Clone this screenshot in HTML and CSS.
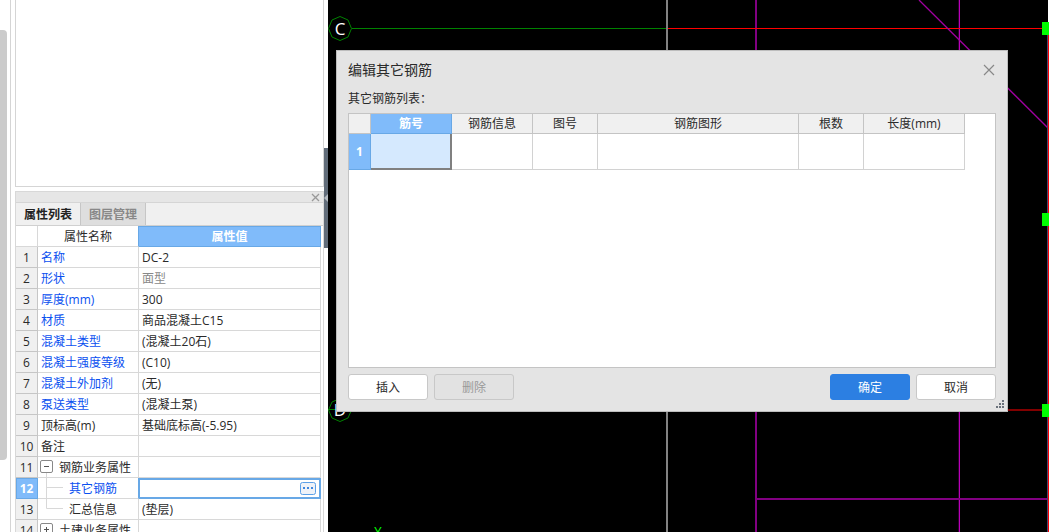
FILE: index.html
```
<!DOCTYPE html>
<html lang="zh-CN">
<head>
<meta charset="utf-8">
<title>属性列表</title>
<link rel="stylesheet" href="styles.css">
</head>
<body>
<div class="app">
  <div class="gutter"><div class="thumb"></div></div>
  <aside class="side">
    <div class="tree-pane"></div>
    <section class="props">
      <div class="dock-bar">
        <button class="dock-close" type="button" aria-label="关闭面板"><svg width="9" height="9" viewBox="0 0 9 9"><path d="M1 1L8 8M8 1L1 8" stroke="#999" stroke-width="1.3"/></svg></button>
      </div>
      <div class="tabs">
        <button class="tab active" type="button">属性列表</button><button class="tab" type="button">图层管理</button>
      </div>
      <table class="prop-table">
        <colgroup><col class="c-num"><col class="c-name"><col></colgroup>
        <thead><tr><th class="corner"></th><th class="before-picked">属性名称</th><th class="picked">属性值</th></tr></thead>
        <tbody>
          <tr><th>1</th><td class="link">名称</td><td>DC-2</td></tr>
          <tr><th>2</th><td class="link">形状</td><td class="muted">面型</td></tr>
          <tr><th>3</th><td class="link">厚度(mm)</td><td>300</td></tr>
          <tr><th>4</th><td class="link">材质</td><td>商品混凝土C15</td></tr>
          <tr><th>5</th><td class="link">混凝土类型</td><td>(混凝土20石)</td></tr>
          <tr><th>6</th><td class="link">混凝土强度等级</td><td>(C10)</td></tr>
          <tr><th>7</th><td class="link">混凝土外加剂</td><td>(无)</td></tr>
          <tr><th>8</th><td class="link">泵送类型</td><td>(混凝土泵)</td></tr>
          <tr><th>9</th><td>顶标高(m)</td><td>基础底标高(-5.95)</td></tr>
          <tr><th>10</th><td>备注</td><td></td></tr>
          <tr><th>11</th><td class="tree"><div class="node"><button class="toggle" type="button" aria-label="收起"><svg width="13" height="20" viewBox="0 0 13 20"><rect x=".5" y="3.500" width="12" height="12" rx="1.500" fill="#fff" stroke="#888"/><path d="M4 9.500H9" stroke="#555"/><path d="M6.500 16V20" stroke="#d8d8d8"/></svg></button>钢筋业务属性</div></td><td></td></tr>
          <tr class="current"><th>12</th><td class="tree link before-picked"><div class="node"><svg class="guide" width="23" height="20" viewBox="0 0 23 20"><path d="M6.500 0V20M6.500 9.500H23" fill="none" stroke="#d8d8d8"/></svg>其它钢筋</div></td><td class="edit"><div class="editor"><input type="text" aria-label="其它钢筋"><button class="more" type="button" aria-label="编辑其它钢筋"><svg width="16" height="13" viewBox="0 0 16 13"><rect x=".5" y=".5" width="15" height="12" rx="2" fill="#eef2f8" stroke="#5ba0e8"/><path d="M3 5h2v2H3zM7 5h2v2H7zM11 5h2v2h-2z" fill="#3f87de"/></svg></button></div></td></tr>
          <tr><th>13</th><td class="tree"><div class="node"><svg class="guide" width="23" height="20" viewBox="0 0 23 20"><path d="M6.500 0V9.500H23" fill="none" stroke="#d8d8d8"/></svg>汇总信息</div></td><td>(垫层)</td></tr>
          <tr><th>14</th><td class="tree"><div class="node"><button class="toggle" type="button" aria-label="展开"><svg width="13" height="20" viewBox="0 0 13 20"><rect x=".5" y="3.500" width="12" height="12" rx="1.500" fill="#fff" stroke="#888"/><path d="M4 9.500H9M6.500 7V12" stroke="#555"/></svg></button>土建业务属性</div></td><td></td></tr>
        </tbody>
      </table>
    </section>
  </aside>
  <div class="splitter"><button class="grip" type="button" aria-label="折叠侧栏"><svg width="4" height="8" viewBox="0 0 4 8"><path d="M4 0V8L0 4z" fill="#b5bbc2"/></svg></button></div>
  <main class="canvas">
    <svg class="drawing" width="721" height="532" viewBox="0 0 721 532" fill="none" shape-rendering="crispEdges">
      <path d="M24 28.500H339" stroke="#008200"/>
      <path d="M339 0V532" stroke="#828282" stroke-width="2"/>
      <path d="M428 0V532" stroke="#820082" stroke-width="2"/>
      <path d="M630.500 0V532" stroke="#320032"/>
      <path d="M631.500 0V532" stroke="#b900b9"/>
      <path d="M340 28.500H715" stroke="#f00"/>
      <path d="M428 499H721" stroke="#820082" stroke-width="2"/>
      <path d="M591 0L720 128" stroke="#a000a0" stroke-width="1.300" shape-rendering="auto"/>
      <path d="M0 409.500H339" stroke="#008200"/>
      <path d="M339 410H715" stroke="#820000" stroke-width="2"/>
      <path d="M719.500 34V532" stroke="#46466e"/>
      <path d="M720.500 34V532" stroke="#f00"/>
      <path d="M720.500 0V22" stroke="#fff"/>
      <path d="M714 22h7v13h-7zM714 213h7v13h-7zM714 404h7v13h-7z" fill="#0f0"/>
      <path d="M12 16.500L20 20L23.500 28.500L20 37L12 40.500L4 37L.5 28.500L4 20zM12 398.500L20 402L23.500 410L20 418L12 421.500L4 418L.5 410L4 402z" stroke="#008200" shape-rendering="auto"/>
      <text class="axis" x="12" y="35" text-anchor="middle">C</text>
      <text class="axis" x="12" y="416" text-anchor="middle">D</text>
      <text class="axis y" x="50" y="536" text-anchor="middle">Y</text>
    </svg>
    <section class="dialog" role="dialog" aria-labelledby="dlg-title">
      <header class="dlg-head">
        <h1 id="dlg-title">编辑其它钢筋</h1>
        <button class="dlg-close" type="button" aria-label="关闭"><svg width="12" height="12" viewBox="0 0 12 12"><path d="M1 1L11 11M11 1L1 11" stroke="#888" stroke-width="1.2"/></svg></button>
      </header>
      <p class="dlg-label" id="list-label">其它钢筋列表：</p>
      <div class="grid-box">
        <table class="grid" aria-labelledby="list-label">
          <colgroup><col class="g-num"><col class="g-a"><col class="g-a"><col class="g-b"><col class="g-c"><col class="g-b"><col class="g-d"></colgroup>
          <thead><tr><th></th><th class="picked">筋号</th><th>钢筋信息</th><th>图号</th><th>钢筋图形</th><th>根数</th><th>长度(mm)</th></tr></thead>
          <tbody><tr><th class="picked">1</th><td class="cell-on"></td><td></td><td></td><td></td><td></td><td></td></tr></tbody>
        </table>
      </div>
      <footer class="actions">
        <button class="btn" type="button">插入</button>
        <button class="btn" type="button" disabled>删除</button>
        <button class="btn primary" type="button">确定</button>
        <button class="btn" type="button">取消</button>
      </footer>
      <svg class="resize" width="8" height="8" viewBox="0 0 8 8"><path d="M6 0h2v2H6zM3 3h2v2H3zM6 3h2v2H6zM0 6h2v2H0zM3 6h2v2H3zM6 6h2v2H6z" fill="#6b727c"/></svg>
    </section>
  </main>
</div>
</body>
</html>
```
FILE: styles.css
```
* { box-sizing: border-box; }
body {
  margin: 0;
  background: #fff;
  color: #2a2a2a;
  font: 12px/18px "Open Sans", "Noto Sans CJK SC", sans-serif;
}
button, input { margin: 0; padding: 0; border: 0; background: none; color: inherit; font: inherit; }
svg { display: block; }
.app { display: flex; height: 100vh; overflow: hidden; }

.gutter { flex: none; width: 11px; padding-top: 30px; border-right: 1px solid #d5d5d5; }
.thumb { width: 7px; height: 430px; background: #cbcbcb; border-radius: 0 4px 4px 0; }

.side { flex: none; display: flex; flex-direction: column; gap: 4px; width: 309px; margin-left: 4px; }
.tree-pane { flex: none; height: 187px; border: 1px solid #d5d5d5; border-top: 0; }
.props { flex: 1; min-height: 0; border: 1px solid #d8d8d8; border-bottom: 0; }
.dock-bar { display: flex; justify-content: flex-end; align-items: center; height: 11px; padding-right: 3px; background: #e6e6e6; border-bottom: 1px solid #d5d5d5; }
.tabs { display: flex; height: 23px; background: #f0f0f0; border-bottom: 1px solid #d0d0d0; }
.tab { width: 65px; padding-top: 2px; background: #dedede; color: #888; font-weight: bold; border: 1px solid #c6c6c6; border-width: 0 1px 0 0; }
.tab.active { background: #f0f0f0; color: #222; }

table { border-collapse: separate; border-spacing: 0; table-layout: fixed; }
th, td { padding: 0; font-weight: normal; }
.prop-table { width: 305px; }
.c-num { width: 22px; }
.c-name { width: 101px; }
.prop-table th, .prop-table td { height: 21px; padding-top: 2px; line-height: 18px; border-right: 1px solid #d8d8d8; border-bottom: 1px solid #d8d8d8; white-space: nowrap; }
.prop-table td { padding-left: 3px; text-align: left; }
.prop-table tbody th { background: #f0f0f0; border-color: #c6c6c6; }
.prop-table .tree { padding: 0 0 0 2px; }
.prop-table .picked, .grid .picked { background: #80bbfa; color: #fff; font-weight: bold; border-color: #68a8e6; }
.prop-table .picked { box-shadow: inset 0 1px #68a8e6; }
.prop-table .before-picked { border-right-color: #68a8e6; }
.link { color: #0a50f0; }
.muted { color: #888; }
.node { display: flex; height: 20px; line-height: 22px; }
.toggle { margin-right: 6px; }
.guide { margin-right: 6px; }
.prop-table .current th { background: #80bbfa; color: #fff; font-weight: bold; border-color: #68a8e6; box-shadow: inset 1px 1px #68a8e6; }
.prop-table .current .edit { padding: 0; border: 1px solid #68a8e6; box-shadow: inset 0 1px #68a8e6, inset 0 -1px #68a8e6, inset -1px 0 #68a8e6; }
.editor { display: flex; align-items: center; height: 19px; padding: 0 4px; }
.editor input { flex: 1; min-width: 0; height: 15px; outline: 0; }

.splitter { flex: none; width: 4px; padding-top: 148px; }
.grip { display: flex; align-items: center; width: 4px; height: 100px; background: #626d7a; }

.canvas { position: relative; flex: 1; min-width: 0; background: #000; overflow: hidden; }
.axis { fill: #fff; font: 17px "Open Sans", sans-serif; }
.axis.y { fill: #0f0; font-size: 13px; }

.dialog { position: absolute; top: 50px; left: 8px; right: 41px; padding: 0 11px 11px; background: #e4e4e4; border: 1px solid #bdbdbd; }
.dlg-head { display: flex; justify-content: space-between; align-items: center; height: 38px; }
.dlg-head h1 { margin: 0; font-size: 14px; line-height: 20px; font-weight: normal; }
.dlg-label { margin: 0; height: 24px; line-height: 20px; }
.grid-box { height: 255px; background: #fff; border: 1px solid #c4c4c4; }
.grid { width: 616px; }
.g-num { width: 22px; }
.g-a { width: 81px; }
.g-b { width: 65px; }
.g-c { width: 201px; }
.g-d { width: 101px; }
.grid th, .grid td { border-right: 1px solid #c4c4c4; border-bottom: 1px solid #c4c4c4; }
.grid thead th { height: 20px; padding-top: 1px; line-height: 18px; background: #f0f0f0; }
.grid thead .picked { background: #80bbfa; }
.grid td { height: 36px; border-color: #d2d2d2; }
.grid .cell-on { background: #d5e9fe; border: 2px solid #808080; border-width: 0 2px 2px 0; }
.dlg-close { margin-right: 1px; }
.actions { display: flex; gap: 6px; margin-top: 6px; }
.btn { width: 80px; height: 26px; padding-top: 2px; background: #fff; border: 1px solid #c8c8c8; border-radius: 3px; }
.btn:disabled { background: #e2e2e2; color: #999; }
.btn.primary { margin-left: auto; background: #2c7fe2; border-color: #2c7fe2; color: #fff; }
.resize { position: absolute; right: 3px; bottom: 3px; }
```
